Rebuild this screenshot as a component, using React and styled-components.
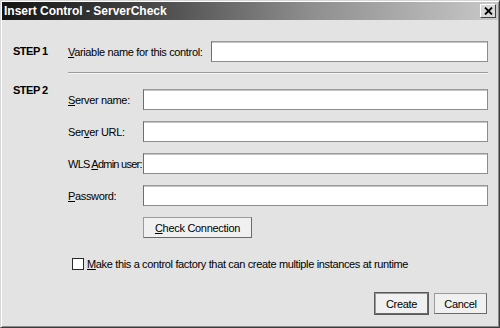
import styled, { createGlobalStyle } from "styled-components";

const GlobalStyle = createGlobalStyle`
  html, body {
    margin: 0;
    padding: 0;
    background: #e3e3e3;
  }
  body {
    font-family: "Liberation Sans", Arial, sans-serif;
    font-size: 11px;
    color: #000;
  }
`;

const Window = styled.div`
  box-sizing: border-box;
  width: 500px;
  height: 328px;
  display: flex;
  flex-direction: column;
  background: #e3e3e3;
  border: 1px solid;
  border-color: #d6d6d6 #3c3c3c #3c3c3c #d6d6d6;
  padding: 1px;
  box-shadow: inset 1px 1px 0 #ffffff, inset -1px -1px 0 #8a8a8a;
`;

const TitleBar = styled.div`
  height: 18px;
  display: flex;
  align-items: center;
  justify-content: space-between;
  padding: 0 2px 0 2px;
  background: linear-gradient(90deg, #141414 0%, #3e3e3e 25%, #8e8e8e 62%, #c8c8c8 100%);
`;

const Title = styled.span`
  color: #fff;
  font-weight: bold;
  font-size: 12px;
`;

const CloseBox = styled.div`
  width: 16px;
  height: 14px;
  box-sizing: border-box;
  display: flex;
  align-items: center;
  justify-content: center;
  background: #d8d8d8;
  border: 1px solid;
  border-color: #ffffff #404040 #404040 #ffffff;
`;

const Body = styled.div`
  flex: 1;
  display: flex;
  flex-direction: column;
  padding: 21px 10px 0 11px;
`;

const Section = styled.div`
  display: flex;
  align-items: ${(p) => (p.$top ? "flex-start" : "center")};
  padding-top: ${(p) => p.$pad || 0}px;
`;

const StepLabel = styled.div`
  width: 55px;
  flex-shrink: 0;
  font-weight: bold;
  letter-spacing: -0.5px;
  line-height: 13px;
`;

const Label = styled.label`
  width: ${(p) => p.$w}px;
  flex-shrink: 0;
  letter-spacing: ${(p) => (p.$tight ? "-0.75px" : "-0.35px")};
  white-space: nowrap;
  u {
    text-decoration: underline;
    text-underline-offset: 1px;
  }
`;

const Input = styled.input`
  flex: 1;
  min-width: 0;
  box-sizing: border-box;
  height: 21px;
  margin: 0;
  background: #fff;
  border: 1px solid;
  border-color: #9a9a9a #8c8c8c #8c8c8c #6e6e6e;
  box-shadow: inset 0 1px 0 #c4c4c4;
  outline: none;
`;

const Divider = styled.div`
  margin: 10px 0 0 55px;
  height: 1px;
  background: #9c9c9c;
  box-shadow: 0 1px 0 #f4f4f4;
`;

const Fields = styled.div`
  flex: 1;
  display: flex;
  flex-direction: column;
  gap: 11px;
  padding-top: 5px;
`;

const FieldRow = styled.div`
  display: flex;
  align-items: center;
`;

const Button = styled.button`
  box-sizing: border-box;
  height: 21px;
  width: ${(p) => p.$w}px;
  margin: 0 0 0 ${(p) => p.$ml || 0}px;
  padding: 0;
  font-family: inherit;
  font-size: 11px;
  letter-spacing: -0.3px;
  color: #000;
  background: #f0f0f0;
  border: 1px solid;
  border-color: #9a9a9a #6a6a6a #6a6a6a #9a9a9a;
  box-shadow: ${(p) => (p.$default ? "0 0 0 1px #5a5a5a" : "none")};
  u {
    text-underline-offset: 1px;
  }
`;

const CheckRow = styled.div`
  display: flex;
  align-items: center;
  gap: 3px;
  margin: 20px 0 0 59px;
  letter-spacing: -0.35px;
  u {
    text-underline-offset: 1px;
  }
`;

const CheckBox = styled.span`
  width: 12px;
  height: 12px;
  box-sizing: border-box;
  background: #fff;
  border: 1px solid #2a2a2a;
`;

const Footer = styled.div`
  display: flex;
  justify-content: flex-end;
  gap: 6px;
  margin-top: 23px;
  padding-right: 1px;
`;

export default function App() {
  return (
    <>
      <GlobalStyle />
      <Window>
        <TitleBar>
          <Title>Insert Control - ServerCheck</Title>
          <CloseBox>
            <svg width="9" height="8" viewBox="0 0 9 8">
              <path d="M1 0.5 L8 7.5 M8 0.5 L1 7.5" stroke="#000" strokeWidth="1.8" />
            </svg>
          </CloseBox>
        </TitleBar>
        <Body>
          <Section>
            <StepLabel>STEP 1</StepLabel>
            <Label $w={143}>
              <u>V</u>ariable name for this control:
            </Label>
            <Input />
          </Section>
          <Divider />
          <Section $top $pad={11}>
            <StepLabel>STEP 2</StepLabel>
            <Fields>
              <FieldRow>
                <Label $w={75}>
                  <u>S</u>erver name:
                </Label>
                <Input />
              </FieldRow>
              <FieldRow>
                <Label $w={75}>
                  Ser<u>v</u>er URL:
                </Label>
                <Input />
              </FieldRow>
              <FieldRow>
                <Label $w={75} $tight>
                  WLS <u>A</u>dmin user:
                </Label>
                <Input />
              </FieldRow>
              <FieldRow>
                <Label $w={75}>
                  <u>P</u>assword:
                </Label>
                <Input />
              </FieldRow>
              <FieldRow>
                <Button $w={109} $ml={75}>
                  <u>C</u>heck Connection
                </Button>
              </FieldRow>
            </Fields>
          </Section>
          <CheckRow>
            <CheckBox />
            <span>
              <u>M</u>ake this a control factory that can create multiple instances at runtime
            </span>
          </CheckRow>
          <Footer>
            <Button $w={53} $default>
              Create
            </Button>
            <Button $w={53}>Cancel</Button>
          </Footer>
        </Body>
      </Window>
    </>
  );
}
